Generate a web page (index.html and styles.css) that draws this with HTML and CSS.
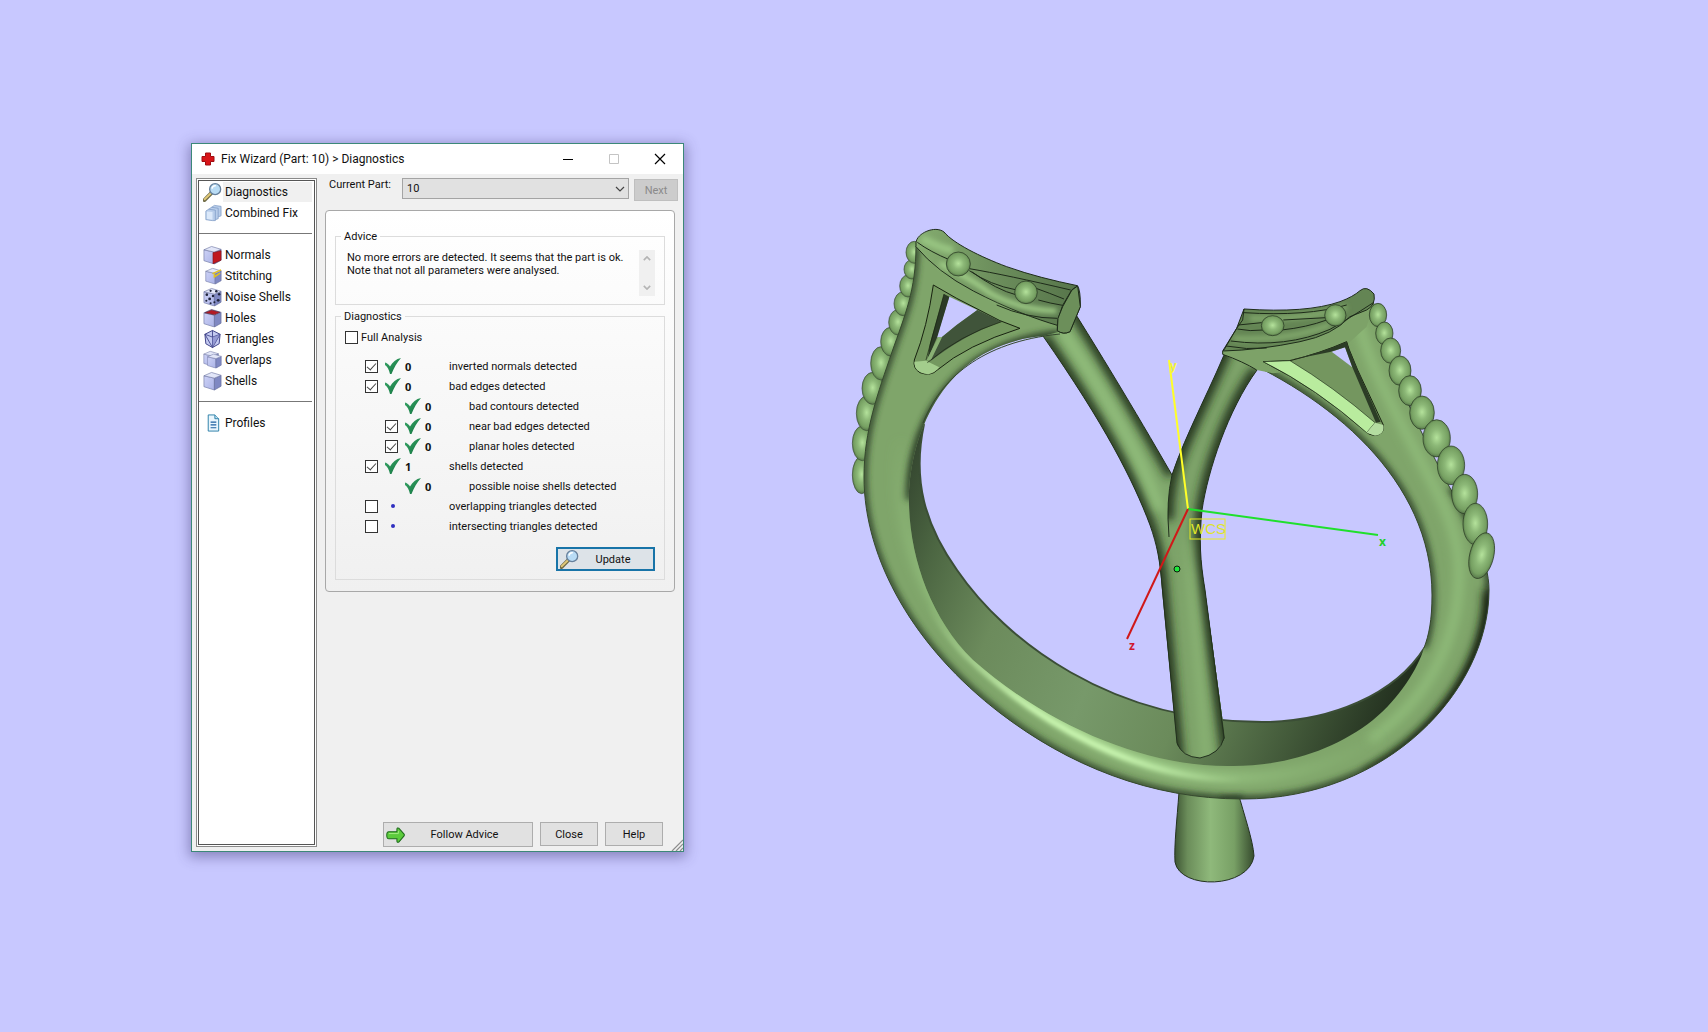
FILE: index.html
```html
<!DOCTYPE html>
<html lang="en">
<head>
<meta charset="utf-8">
<title>Fix Wizard</title>
<link rel="stylesheet" href="styles.css">
</head>
<body>
<svg class="defs" aria-hidden="true">
  <defs>
    <linearGradient id="face" x1="0" y1="0" x2="1" y2="1"><stop offset="0" stop-color="#cdd2f6"/><stop offset="1" stop-color="#aab2e6"/></linearGradient>
    <linearGradient id="tick" x1="0" y1="0" x2="1" y2="1"><stop offset="0" stop-color="#3aa86a"/><stop offset="1" stop-color="#10703c"/></linearGradient>
  </defs>
  <symbol id="i-lens" viewBox="0 0 20 20"><path d="M1.500 18.500 9 11" stroke="#6f6a45" stroke-width="4" stroke-linecap="round"/><path d="M1.800 17.600 8.600 11" stroke="#e0c878" stroke-width="2" stroke-linecap="round"/><circle cx="12.800" cy="7" r="5.800" fill="#b9dcf5" stroke="#66809c" stroke-width="1.400"/><path d="M9.500 6.500a3.600 3.600 0 0 1 4-3" stroke="#fff" stroke-width="1.600" fill="none"/></symbol>
  <symbol id="i-box" viewBox="0 0 20 20"><path d="M1 4.500l11 2.500v12.500L1 16z" fill="url(#face)" stroke="#767da8" stroke-width=".7"/><path d="M12 7l7-3v11.500l-7 4z" fill="#7f88c2" stroke="#666e9c" stroke-width=".7"/><path d="M1 4.500 9 1l10 3-7 3z" fill="#e2e6f8" stroke="#767da8" stroke-width=".7"/></symbol>
  <symbol id="i-combined" viewBox="0 0 20 20"><g fill="#b8cdea" stroke="#7f9cc6" stroke-width=".8"><path d="M9 4l3-2 7 1v10l-3 1H9z"/><path d="M6 6l3-2 7 1v11l-3 1H6z"/><path d="M3 8l3-2 7 1v11l-3 0-7-1z"/></g><path d="M4 8.500l6 .5v8l-6-.6z" fill="#dce9fa"/></symbol>
  <symbol id="i-normals" viewBox="0 0 20 20"><use href="#i-box"/><path d="M10.500 7.500l8.500-2v10l-8.500 3.700z" fill="#c01820" stroke="#7c1018" stroke-width=".6"/></symbol>
  <symbol id="i-stitch" viewBox="0 0 20 20"><use href="#i-box" x="2" y="1" width="18" height="18"/><path d="M10 7.500l9-4M12 8v3l6-4" stroke="#e3c21c" stroke-width="1.600" fill="none"/></symbol>
  <symbol id="i-noise" viewBox="0 0 20 20"><use href="#i-box"/><g fill="#20253c"><circle cx="4" cy="7.500" r="1.400"/><circle cx="7" cy="12" r="1.500"/><circle cx="3.500" cy="14" r="1.100"/><circle cx="10.500" cy="9" r="1.300"/><circle cx="17" cy="7" r="1.300"/><circle cx="16" cy="13.500" r="1.500"/><circle cx="12" cy="15.500" r="1.100"/><circle cx="8" cy="3.500" r="1.200"/><circle cx="14" cy="4" r="1.300"/><circle cx="8" cy="16.500" r="1.100"/></g></symbol>
  <symbol id="i-holes" viewBox="0 0 20 20"><use href="#i-box"/><path d="M2 4.500 9 1.500l9 2.500-6 2.700z" fill="#b41a24" stroke="#5c3048" stroke-width=".8"/></symbol>
  <symbol id="i-tri" viewBox="0 0 20 20"><path d="M2 5 10 1l8 4-1 10-7 4-7-4z" fill="#c3c9f0" stroke="#3c3f86"/><path d="M2 5l8 3 8-3M10 8v11M2 5l8 14 8-14M10 1v7" fill="none" stroke="#3c3f86" stroke-width=".9"/><path d="M10 8l8-3-8 14z" fill="#8186c8" opacity=".7"/></symbol>
  <symbol id="i-over" viewBox="0 0 20 20"><use href="#i-box" width="17" height="17"/><use href="#i-box" x="4" y="3" width="16" height="16"/></symbol>
  <symbol id="i-profile" viewBox="0 0 20 20"><path d="M5.500 1.500h7l4 4v13h-11z" fill="#eaf6fd" stroke="#2a7ea8"/><path d="M12.500 1.500v4h4" fill="#bfe0f0" stroke="#2a7ea8"/><path d="M8 9h6M8 12h6M8 15h6" stroke="#1c5fa0" stroke-width="1.300"/></symbol>
  <symbol id="i-check" viewBox="0 0 16 16"><path d="M0 4.500C2 5 3.800 6.500 5 8.500 7.500 4 11 1 16 0 12 4.500 9 9.500 6.500 16H5C4 12 2.500 8.500 0 7z" fill="url(#tick)"/></symbol>
  <symbol id="i-arrow" viewBox="0 0 20 18"><path d="M3 5.500h8.500V3q0-2 2-1.200L19 8q.6 1 0 2l-5.500 6.500q-2 .8-2-1.200V13H3Q.8 13 .8 9.200T3 5.500z" fill="#5ccb3c" stroke="#1d6a1c" stroke-width="1.100"/><path d="M3 7.500h10V4.500" fill="none" stroke="#a5ec84"/></symbol>
</svg>

<main class="desktop">
  <svg class="scene" viewBox="0 0 1708 1032" role="img" aria-label="Ring model with coordinate axes">
    <defs>
      <radialGradient id="bead" cx=".5" cy=".48" r=".56"><stop offset="0" stop-color="#b4e29b"/><stop offset=".4" stop-color="#8cb877"/><stop offset=".75" stop-color="#76a062"/><stop offset="1" stop-color="#4a6740"/></radialGradient>
      <linearGradient id="cone"><stop offset="0" stop-color="#3e5634"/><stop offset=".16" stop-color="#6b8d5a"/><stop offset=".45" stop-color="#8fb97b"/><stop offset=".75" stop-color="#78a065"/><stop offset="1" stop-color="#364b2e"/></linearGradient>
      <linearGradient id="wall" gradientUnits="userSpaceOnUse" x1="905" y1="470" x2="1420" y2="680"><stop offset="0" stop-color="#354730"/><stop offset=".1" stop-color="#4c6642"/><stop offset=".25" stop-color="#6c8b5c"/><stop offset=".45" stop-color="#77996a"/><stop offset=".62" stop-color="#6b8b5b"/><stop offset=".82" stop-color="#435a3a"/><stop offset="1" stop-color="#1e2a1b"/></linearGradient>
      <linearGradient id="headTop" x1="0" y1="0" x2="1" y2="0"><stop offset="0" stop-color="#85ad70"/><stop offset=".5" stop-color="#6b8d5b"/><stop offset="1" stop-color="#56744a"/></linearGradient>
      <linearGradient id="soft" gradientUnits="userSpaceOnUse" x1="890" y1="440" x2="1380" y2="760"><stop offset="0" stop-color="#93c07d" stop-opacity="0"/><stop offset=".25" stop-color="#93c07d"/><stop offset=".45" stop-color="#b0de98"/><stop offset=".7" stop-color="#a0cf8a"/><stop offset="1" stop-color="#93c07d" stop-opacity="0"/></linearGradient>
      <linearGradient id="glint" gradientUnits="userSpaceOnUse" x1="930" y1="600" x2="1250" y2="770"><stop offset="0" stop-color="#cdfab4" stop-opacity="0"/><stop offset=".4" stop-color="#cdfab4"/><stop offset=".65" stop-color="#cdfab4"/><stop offset="1" stop-color="#cdfab4" stop-opacity="0"/></linearGradient>
      <linearGradient id="fade" gradientUnits="userSpaceOnUse" x1="0" y1="515" x2="0" y2="575"><stop offset="0" stop-color="#000"/><stop offset="1" stop-color="#fff"/></linearGradient>
      <mask id="stemMask" maskUnits="userSpaceOnUse" x="1100" y="480" width="180" height="300"><rect x="1100" y="480" width="180" height="300" fill="url(#fade)"/></mask>
      <filter id="b2" filterUnits="userSpaceOnUse" x="800" y="200" width="740" height="700"><feGaussianBlur stdDeviation="2"/></filter>
      <filter id="b3" filterUnits="userSpaceOnUse" x="800" y="200" width="740" height="700"><feGaussianBlur stdDeviation="3"/></filter>
      <filter id="b5" filterUnits="userSpaceOnUse" x="800" y="200" width="740" height="700"><feGaussianBlur stdDeviation="5"/></filter>
      <filter id="h9" filterUnits="userSpaceOnUse" x="-100" y="-100" width="1300" height="1100"><feGaussianBlur stdDeviation="8"/></filter>
      <path id="band" d="M916 246C916 290 905 315 892 352C878 393 864 430 864 477C864 560 915 648 1000 713C1068 765 1150 799 1243 799C1388 799 1489 690 1489 590C1489 560 1470 520 1450 488C1425 440 1390 375 1373 301L1350 310L1330 325C1290 342 1250 347 1223 351C1330 395 1432 480 1432 595C1432 620 1429 635 1424 648C1418 668 1400 698 1373 720C1335 750 1285 766 1233 766C1150 768 1050 728 973 660C930 618 909 555 909 500C909 440 940 345 1043 336L1062 331V322C1010 308 945 275 916 240Z"/>
      <clipPath id="bandClip"><use href="#band"/></clipPath>
      <path id="strutL" d="M1035 325L1073 310C1095 345 1133 407 1172 475C1185 530 1195 590 1205 640L1170 660L1162 585C1160 560 1156 540 1150 525C1133 480 1105 425 1043 336Z"/>
      <path id="strutR" d="M1230 340C1215 380 1185 435 1172 475C1167 500 1167 520 1169 537L1177 745Q1184 757 1200 758Q1218 754 1225 738L1205 590C1200 560 1199 540 1202 510C1208 470 1228 410 1257 370Z"/>
      <clipPath id="clipL"><use href="#strutL"/></clipPath>
      <clipPath id="clipR"><use href="#strutR"/></clipPath>
      <path id="stem" d="M1150 525C1158 545 1160 565 1162 590L1177 745Q1184 757 1200 758Q1218 754 1225 738L1205 590C1200 560 1199 540 1202 510Z"/>
      <clipPath id="stemClip"><use href="#stem"/></clipPath>
    </defs>

    <!-- pave beads on the far shoulder -->
    <g transform="translate(840 210) scale(.33333)" fill="url(#bead)" stroke="#3b5033" stroke-width="2">
      <ellipse cx="65" cy="795" rx="28" ry="56"/><ellipse cx="67" cy="700" rx="30" ry="52"/><ellipse cx="80" cy="610" rx="31" ry="52"/><ellipse cx="98" cy="535" rx="32" ry="48"/><ellipse cx="123" cy="460" rx="31" ry="50"/><ellipse cx="152" cy="395" rx="30" ry="43"/><ellipse cx="174" cy="337" rx="28" ry="38"/><ellipse cx="190" cy="281" rx="28" ry="36"/><ellipse cx="204" cy="228" rx="25" ry="33"/><ellipse cx="216" cy="178" rx="24" ry="29"/><ellipse cx="223" cy="127" rx="25" ry="33"/>
    </g>

    <!-- foot -->
    <path d="M1179 792C1177 820 1174 845 1175 862C1180 890 1249 889 1254 856C1253 840 1244 815 1238 792Z" fill="url(#cone)" stroke="#24331f" stroke-width="1"/>

    <!-- inner wall -->
    <path d="M924 424C912 480 925 525 957 570C1005 640 1110 722 1262 722C1330 722 1395 695 1425 647L1440 660L1400 730L1330 775L1240 785L1090 755L950 660L895 540V460Z" fill="url(#wall)"/>
    <path d="M924 424C912 480 925 525 957 570C1005 640 1110 722 1262 722C1330 722 1395 695 1425 647" fill="none" stroke="#3b4e36" stroke-width="2"/>

    <!-- forked stem -->
    <use href="#strutL" fill="#80a86c"/>
    <g clip-path="url(#clipL)" fill="none">
      <path d="M1043 336C1105 425 1133 480 1150 525C1157 545 1160 560 1162 585L1177 743M1073 310C1095 345 1133 407 1172 475" stroke="#23331f" stroke-width="11" filter="url(#b5)"/>
      <path d="M1062 330C1105 395 1138 450 1160 510" stroke="#93c07d" stroke-width="9" filter="url(#b5)"/>
    </g>
    <use href="#strutR" fill="#7da369"/>
    <g clip-path="url(#clipR)" fill="none">
      <path d="M1230 340C1215 380 1185 435 1172 475C1167 500 1167 510 1168 520M1225 738L1205 590C1200 560 1199 540 1202 510C1208 470 1228 410 1257 370" stroke="#23331f" stroke-width="12" filter="url(#b5)"/>
    </g>
    <g mask="url(#stemMask)">
      <use href="#stem" fill="#7da369"/>
      <g clip-path="url(#stemClip)" fill="none">
        <path d="M1140 500C1158 545 1160 565 1162 590L1178 760M1228 760L1205 590C1200 560 1199 540 1202 500" stroke="#23331f" stroke-width="12" filter="url(#b5)"/>
        <path d="M1188 540L1206 760" stroke="#8ab475" stroke-width="8" filter="url(#b5)"/>
      </g>
    </g>
    <path d="M1043 336C1105 425 1133 480 1150 525C1157 545 1160 560 1162 585L1177 743Q1182 757 1200 758Q1220 754 1224 738L1205 590C1200 560 1199 540 1202 510C1208 470 1228 410 1257 370M1073 310C1095 345 1133 407 1172 475Q1166 500 1169 537M1172 475C1185 435 1215 380 1230 340" fill="none" stroke="#22301e" stroke-width="1"/>

    <!-- shank -->
    <use href="#band" fill="#7fa56a"/>
    <g clip-path="url(#bandClip)" fill="none">
      <path d="M916 246C916 290 905 315 892 352C878 393 864 430 864 477C864 560 915 648 1000 713C1068 765 1150 799 1243 799" stroke="#2b3d25" stroke-width="6" filter="url(#b3)"/>
      <path d="M1220 800L1243 799C1388 799 1489 690 1489 590C1489 560 1470 520 1450 488" stroke="#2b3d25" stroke-width="6" filter="url(#b3)"/>
      <path d="M1370 778C1445 735 1492 660 1491 590" stroke="#1a2716" stroke-width="16" filter="url(#b5)"/>
      <path d="M909 500C909 440 940 345 1060 334" stroke="#2b3d25" stroke-width="8" filter="url(#b3)"/>
      <path d="M1223 351C1330 395 1432 480 1432 595C1432 620 1429 635 1424 648" stroke="#2b3d25" stroke-width="6" filter="url(#b3)"/>
      <path d="M1358 320C1370 370 1405 430 1436 490C1462 540 1462 570 1456 610C1446 660 1420 705 1370 740" stroke="#8fbb79" stroke-width="10" filter="url(#b5)"/>
      <path d="M900 440C893 520 920 590 968 645C1045 725 1140 778 1240 778C1290 778 1340 764 1380 738" stroke="url(#soft)" stroke-width="13" filter="url(#b5)"/>
      <path d="M920 590C935 620 950 640 965 655C1040 725 1140 780 1240 780" stroke="url(#glint)" stroke-width="5" filter="url(#b2)"/>
    </g>
    <path d="M1373 301C1390 375 1425 440 1450 488C1470 520 1489 560 1489 590C1489 690 1388 799 1243 799C1150 799 1068 765 1000 713C915 648 864 560 864 477C864 430 878 393 892 352C905 315 916 290 916 246M1223 351C1330 395 1432 480 1432 595C1432 620 1429 635 1424 648M923 423C940 380 980 342 1060 334" fill="none" stroke="#35482e" stroke-width="1"/>

    <!-- left head -->
    <g transform="translate(840 210) scale(.33333)">
      <path d="M228 98C230 70 285 45 312 66C340 100 420 140 500 170C570 195 640 212 712 227Q722 240 721 290L690 365Q670 375 652 362L652 346C590 328 500 295 400 243Q290 185 228 110Z" fill="url(#headTop)" stroke="#1d2a19" stroke-width="3"/>
      <path d="M245 85Q310 120 340 120" fill="none" stroke="#97c481" stroke-width="24" filter="url(#h9)"/>
      <path d="M300 160Q400 210 450 250Q540 300 650 303" fill="none" stroke="#a5d48c" stroke-width="14" filter="url(#h9)"/>
      <path d="M232 97Q270 125 330 150M388 176Q500 195 692 240M388 182Q450 225 530 240M395 185Q470 240 530 255M580 232Q630 250 672 267M595 270Q630 280 668 286M470 285Q560 325 652 325M652 346L655 325 668 286 695 240 712 228" fill="none" stroke="#1d2a19" stroke-width="3"/>
      <path d="M696 240L713 228 721 290 690 365Q670 375 652 362L654 325 668 290Z" fill="#6c8f5a" stroke="#1d2a19" stroke-width="3"/>
      <path d="M280 225L350 265 480 332 540 355Q380 405 292 480Q272 500 240 488Q218 475 223 450Q262 350 280 225Z" fill="#74985f" stroke="#17210f" stroke-width="3"/>
      <path d="M223 455Q222 488 265 493Q285 488 298 472L258 452Z" fill="#a3cd8c"/>
      <path d="M328 260L412 300 350 345 305 382 290 382Z" fill="#c8c8ff"/>
      <path d="M312 252L328 260 292 380 262 450 270 400Z" fill="#2b3a26"/>
      <path d="M412 300L485 335Q370 375 268 456L305 382 350 345Z" fill="#40543a"/>
      <path d="M260 450L295 382 306 382 272 452Z" fill="#89b074"/>
      <path d="M485 335Q360 375 262 458M312 252L258 450" fill="none" stroke="#17210f" stroke-width="2"/>
      <circle cx="355" cy="162" r="36" fill="url(#bead)" stroke="#26361f" stroke-width="2"/><circle cx="558" cy="247" r="34" fill="url(#bead)" stroke="#26361f" stroke-width="2"/>
    </g>

    <!-- right head and near shoulder beads -->
    <g transform="translate(1100 270) scale(.33333)">
      <path d="M368 243L480 238 600 210 750 140 822 95 800 170 700 260 600 300 520 310 470 300 368 253Z" fill="#7da268"/>
      <path d="M432 117Q620 130 720 95Q760 80 780 62Q800 45 822 72Q828 105 800 120L750 140Q700 195 600 215Q480 240 370 243L410 175Z" fill="#648554" stroke="#1d2a19" stroke-width="3"/>
      <path d="M400 205Q560 215 690 165M450 145Q620 150 740 112" fill="none" stroke="#85ad6f" stroke-width="14" filter="url(#h9)"/>
      <path d="M432 128Q620 140 740 105M415 165L485 158M412 177Q450 185 490 180M550 150L678 143M545 180Q620 172 680 150M392 213Q560 235 690 178Q740 150 820 98M378 228Q440 240 500 234M432 117L428 150 410 175 368 243V253Q430 275 470 300" fill="none" stroke="#1d2a19" stroke-width="3"/>
      <path d="M490 275L570 272Q660 250 740 215L747 237 773 300 850 465Q856 492 825 497Q805 495 795 483Q650 355 490 275Z" fill="#74965f" stroke="#17210f" stroke-width="3"/>
      <path d="M490 275L570 272Q700 350 825 458L800 488Q650 355 490 275Z" fill="#b9ec9e" stroke="#26361f" stroke-width="2"/>
      <path d="M825 458L850 465Q856 492 825 497L800 488Z" fill="#b4dda0"/>
      <path d="M695 245L735 232 757 292Z" fill="#c8c8ff"/>
      <path d="M560 272Q660 250 740 215L747 237 773 300 842 455 828 458 757 292 735 232 690 246Z" fill="#2c3c26"/>
      <g fill="url(#bead)" stroke="#26361f" stroke-width="2">
        <ellipse cx="518" cy="167" rx="34" ry="30"/><circle cx="706" cy="136" r="32"/>
        <ellipse cx="834" cy="135" rx="26" ry="35"/><ellipse cx="853" cy="190" rx="26" ry="34"/><ellipse cx="872" cy="242" rx="30" ry="38"/><ellipse cx="900" cy="302" rx="33" ry="44"/><ellipse cx="930" cy="362" rx="34" ry="45"/><ellipse cx="966" cy="428" rx="37" ry="50"/><ellipse cx="1010" cy="505" rx="41" ry="56"/><ellipse cx="1053" cy="586" rx="41" ry="58"/><ellipse cx="1094" cy="672" rx="39" ry="59"/><ellipse cx="1126" cy="762" rx="37" ry="62"/><ellipse cx="1145" cy="857" rx="36" ry="70" transform="rotate(14 1145 857)"/>
      </g>
    </g>

    <!-- axes -->
    <g fill="none" stroke-width="2">
      <path d="M1188 509L1169 360" stroke="#ffff28"/><path d="M1188 509L1378 535" stroke="#1fe02c"/><path d="M1188 509L1127 639" stroke="#d01818"/>
      <rect x="1190" y="519" width="35" height="20" stroke="#e8ec20" stroke-width="1"/>
    </g>
    <circle cx="1177" cy="569" r="3" fill="#1fe83c" stroke="#0b1a0b" stroke-width="1"/>
    <g class="axis">
      <text x="1170" y="370" fill="#f4f43a">y</text><text x="1379" y="546" fill="#1fd02c">x</text><text x="1129" y="650" fill="#d01830">z</text>
      <text class="wcs" x="1191" y="534" fill="#dfe42a">WCS</text>
    </g>
  </svg>

  <section class="window" aria-label="Fix Wizard">
    <header class="titlebar">
      <svg class="cross" viewBox="0 0 14 14"><path d="M4.500 1h5v3.500H13v5H9.500V13h-5V9.500H1v-5h3.500z" fill="#d81418" stroke="#a00c10"/></svg>
      <h1>Fix Wizard (Part: 10) &gt; Diagnostics</h1>
      <button class="cap" aria-label="Minimize"><svg viewBox="0 0 12 12"><path d="M1 6.500h10" stroke="#000"/></svg></button>
      <button class="cap" aria-label="Maximize" disabled><svg viewBox="0 0 12 12"><path d="M1.500 1.500h9v9h-9z" fill="none" stroke="#c4c4c4"/></svg></button>
      <button class="cap" aria-label="Close window"><svg viewBox="0 0 12 12"><path d="M1 1l10 10M11 1 1 11" stroke="#000" stroke-width="1.200"/></svg></button>
    </header>
    <div class="body">
      <nav class="side">
        <a href="#" class="on"><svg><use href="#i-lens"/></svg><span>Diagnostics</span></a>
        <a href="#"><svg><use href="#i-combined"/></svg><span>Combined Fix</span></a>
        <hr>
        <a href="#"><svg><use href="#i-normals"/></svg><span>Normals</span></a>
        <a href="#"><svg><use href="#i-stitch"/></svg><span>Stitching</span></a>
        <a href="#"><svg><use href="#i-noise"/></svg><span>Noise Shells</span></a>
        <a href="#"><svg><use href="#i-holes"/></svg><span>Holes</span></a>
        <a href="#"><svg><use href="#i-tri"/></svg><span>Triangles</span></a>
        <a href="#"><svg><use href="#i-over"/></svg><span>Overlaps</span></a>
        <a href="#"><svg><use href="#i-box"/></svg><span>Shells</span></a>
        <hr>
        <a href="#"><svg><use href="#i-profile"/></svg><span>Profiles</span></a>
      </nav>
      <div class="content">
        <div class="part">
          <label for="part">Current Part:</label>
          <span class="combo"><select id="part"><option>10</option></select><svg viewBox="0 0 10 6"><path d="M1 1l4 4 4-4" fill="none" stroke="#444" stroke-width="1.200"/></svg></span>
          <button class="btn next" disabled>Next</button>
        </div>
        <div class="panel">
          <fieldset class="advice">
            <legend>Advice</legend>
            <p>No more errors are detected. It seems that the part is ok.<br>Note that not all parameters were analysed.</p>
            <div class="scroll">
              <button aria-label="Scroll up"><svg viewBox="0 0 10 6"><path d="M1 5l4-4 4 4" fill="none" stroke="#b4b4b4" stroke-width="2"/></svg></button>
              <button aria-label="Scroll down"><svg viewBox="0 0 10 6"><path d="M1 1l4 4 4-4" fill="none" stroke="#b4b4b4" stroke-width="2"/></svg></button>
            </div>
          </fieldset>
          <fieldset class="diag">
            <legend>Diagnostics</legend>
            <label class="full"><input type="checkbox">Full Analysis</label>
            <div class="rows">
              <label><input type="checkbox" checked><svg><use href="#i-check"/></svg><b>0</b><span>inverted normals detected</span></label>
              <label><input type="checkbox" checked><svg><use href="#i-check"/></svg><b>0</b><span>bad edges detected</span></label>
              <div class="sub nobox"><svg><use href="#i-check"/></svg><b>0</b><span>bad contours detected</span></div>
              <label class="sub"><input type="checkbox" checked><svg><use href="#i-check"/></svg><b>0</b><span>near bad edges detected</span></label>
              <label class="sub"><input type="checkbox" checked><svg><use href="#i-check"/></svg><b>0</b><span>planar holes detected</span></label>
              <label><input type="checkbox" checked><svg><use href="#i-check"/></svg><b>1</b><span>shells detected</span></label>
              <div class="sub nobox"><svg><use href="#i-check"/></svg><b>0</b><span>possible noise shells detected</span></div>
              <label><input type="checkbox"><i class="dot"></i><b></b><span>overlapping triangles detected</span></label>
              <label><input type="checkbox"><i class="dot"></i><b></b><span>intersecting triangles detected</span></label>
            </div>
            <button class="btn update"><svg><use href="#i-lens"/></svg><span>Update</span></button>
          </fieldset>
        </div>
        <footer class="actions">
          <button class="btn follow"><svg><use href="#i-arrow"/></svg><span>Follow Advice</span></button>
          <button class="btn">Close</button>
          <button class="btn">Help</button>
        </footer>
      </div>
    </div>
    <svg class="grip" viewBox="0 0 12 12"><path d="M1 12 12 1M5 12l7-7M9 12l3-3" stroke="#8c8c8c" stroke-width="1.200"/></svg>
  </section>
</main>
</body>
</html>
```
FILE: styles.css
```css
* { box-sizing: border-box; }
body { margin: 0; background: #c8c8ff; color: #111; font: 11px/13px Roboto, "Liberation Sans", sans-serif; }
.defs { position: absolute; width: 0; height: 0; }
.desktop { position: relative; min-height: 100vh; overflow: hidden; }
.scene { display: block; width: 100%; height: 100vh; }
.axis { font: bold 12px "Noto Sans", sans-serif; }
.axis .wcs { font: 15px "Liberation Sans", sans-serif; }

.window { position: absolute; left: 191px; top: 143px; width: 493px; display: flex; flex-direction: column; background: #f0f0f0; border: 1px solid #3c8878; box-shadow: 0 3px 12px 2px rgba(60, 50, 110, .45); }
.titlebar { display: flex; align-items: center; height: 30px; padding-left: 9px; background: #fff; }
.titlebar h1 { flex: 1; margin: 0 0 0 6px; font: 12px/16px Roboto, sans-serif; white-space: nowrap; }
.cross { width: 14px; height: 14px; }
.cap { display: grid; place-items: center; width: 46px; height: 29px; padding: 0; border: 0; background: none; }
.cap svg { width: 12px; height: 12px; }

.body { display: flex; padding: 4px 5px 4px 4px; min-height: 677px; }
.side { width: 121px; padding: 2px 4px 2px 2px; border: 1px solid #8a8a8a; outline: 1px solid #555; outline-offset: -3px; background: #fff; }
.side a { display: flex; align-items: center; height: 21px; padding-left: 4px; color: #111; font: 12px/16px Roboto, sans-serif; text-decoration: none; white-space: nowrap; }
.side a svg { width: 19px; height: 20px; margin-right: 1px; }
.side a span { flex: 1; padding: 2px; }
.side .on span { background: #f0f0f0; }
.side hr { height: 1px; margin: 10px 0; border: 0; background: #777; }

.content { flex: 1; display: flex; flex-direction: column; padding-left: 8px; }
.part { display: flex; align-items: flex-start; gap: 5px; }
.part label { width: 72px; padding-left: 4px; white-space: nowrap; }
.combo { position: relative; flex: 1; }
.combo select { display: block; width: 100%; height: 21px; padding: 0 4px; appearance: none; border: 1px solid #a4a4a4; border-radius: 0; background: #e1e1e1; color: #111; font: 11px/16px Roboto, sans-serif; }
.combo svg { position: absolute; right: 4px; top: 8px; width: 10px; height: 6px; }
.btn { display: flex; align-items: center; justify-content: center; height: 24px; padding: 0; border: 1px solid #adadad; background: #e1e1e1; color: #111; font: 11px/13px Roboto, "Liberation Sans", sans-serif; }
.btn.next { width: 44px; height: 22px; margin-top: 1px; border-color: #bfbfbf; background: #ccc; color: #8a8a8a; }

.panel { margin: 9px 3px 0 0; padding: 19px 9px 11px; border: 1px solid #a8a8a8; border-radius: 4px; background: linear-gradient(#fff, #f0f0f0); }
fieldset { margin: 0; padding: 0 9px; border: 1px solid #dcdcdc; }
legend { padding: 0 3px; margin-left: -4px; }
.advice { display: flex; height: 75px; }
.advice p { flex: 1; margin: 8px 0 0 2px; white-space: nowrap; }
.scroll { display: flex; flex-direction: column; justify-content: space-between; width: 16px; height: 46px; margin-top: 7px; background: #f0f0f0; }
.scroll button { display: grid; place-items: center; height: 17px; padding: 0; border: 0; background: none; }
.scroll svg { width: 8px; height: 5px; }
.diag { margin-top: 5px; padding-bottom: 8px; }
.full { display: flex; align-items: center; gap: 3px; margin-top: 8px; }
input[type="checkbox"] { flex: none; display: grid; place-items: center; width: 13px; height: 13px; margin: 0; appearance: none; border: 1px solid #333; background: #fff; }
input:checked::after { content: ""; width: 4px; height: 8px; margin-top: -2px; border: solid #444; border-width: 0 1px 1px 0; transform: rotate(42deg); }
.rows { margin: 12px 0 11px 20px; }
.rows > * { display: flex; align-items: center; height: 20px; }
.rows svg, .rows .dot { flex: none; width: 16px; height: 16px; margin-left: 7px; }
.rows b { width: 44px; margin-left: 4px; font: bold 11px/13px "Noto Sans", sans-serif; }
.sub { padding-left: 20px; }
.rows .nobox { padding-left: 33px; }
.dot { display: grid; place-items: center; }
.dot::after { content: ""; width: 4px; height: 4px; border-radius: 2px; background: #3030c0; }
.btn.update { width: 99px; margin-left: auto; border: 2px solid #1874a8; background: #dde3e8; }
.btn svg { width: 19px; height: 20px; margin-left: 2px; }
.btn span { flex: 1; text-align: center; }
.update span { padding-right: 6px; }
.actions { display: flex; gap: 7px; margin-top: auto; padding-right: 15px; justify-content: flex-end; }
.actions .btn { width: 58px; }
.actions .follow { width: 150px; height: 25px; }
.follow span { padding-right: 8px; }
.grip { position: absolute; right: 0; bottom: 0; width: 12px; height: 12px; }
```
